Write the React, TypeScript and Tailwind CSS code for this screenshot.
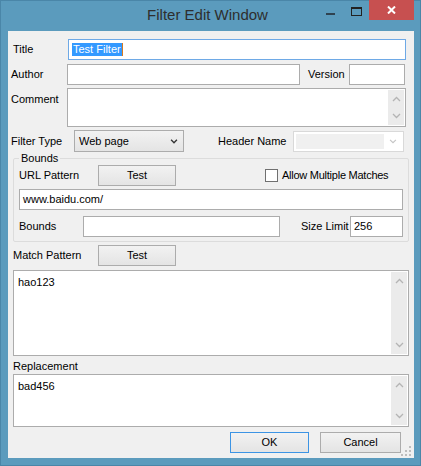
import React from "react";

const F = { fontFamily: '"Liberation Sans", Arial, sans-serif' };

function Chevron({ up = false, color = "#b4b4b4", w = 9, h = 6, sw = 1.3 }: { up?: boolean; color?: string; w?: number; h?: number; sw?: number }) {
  return (
    <svg width={w} height={h} viewBox="0 0 9 6">
      <polyline
        points={up ? "1,5 4.5,1.5 8,5" : "1,1 4.5,4.5 8,1"}
        fill="none"
        stroke={color}
        strokeWidth={sw}
      />
    </svg>
  );
}

function VScroll() {
  return (
    <div className="w-[16px] bg-[#ebebeb] flex flex-col justify-between items-center py-[6px]">
      <Chevron up />
      <Chevron />
    </div>
  );
}

function TextBox({ className = "", children }: { className?: string; children?: React.ReactNode }) {
  return (
    <div className={`h-[21px] bg-white border border-[#acacac] flex items-center px-[3px] text-[11px] text-black ${className}`}>
      {children}
    </div>
  );
}

function Btn({ className = "", children }: { className?: string; children: React.ReactNode }) {
  return (
    <div className={`h-[21px] border bg-gradient-to-b from-[#f2f2f2] to-[#e4e4e4] flex items-center justify-center text-[11px] text-black ${className}`}>
      {children}
    </div>
  );
}

export default function App() {
  return (
    <div style={F} className="w-[421px] h-[466px] bg-[#5b9bbd] border border-[#4a86a8] flex flex-col text-[11px] text-black select-none whitespace-nowrap">
      {/* Title bar */}
      <div className="h-[30px] flex items-start">
        <div className="flex-1" />
        <div className="text-[15px] leading-[28px] text-[#2e2e2e]">Filter Edit Window</div>
        <div className="flex-1 flex justify-end items-start pr-[6px]">
          <div className="w-[26px] h-[20px] flex items-start justify-center pt-[12px]">
            <div className="w-[9px] h-[2px] bg-[#2f4250]" />
          </div>
          <div className="w-[26px] h-[20px] flex items-start justify-center pt-[6px]">
            <div className="w-[11px] h-[9px] border border-t-2 border-[#222]" />
          </div>
          <div className="w-[45px] h-[20px] -mt-px bg-[#c75050] flex items-center justify-center">
            <svg width="9" height="8" viewBox="0 0 9 8">
              <path d="M1 0.5 L8 7.5 M8 0.5 L1 7.5" stroke="white" strokeWidth="2" />
            </svg>
          </div>
        </div>
      </div>

      {/* Client area */}
      <div className="relative ml-[7px] mr-[6px] w-[406px] h-[427px] bg-[#f0f0f0] flex flex-col">
        {/* Title */}
        <div className="mt-[8px] h-[21px] flex items-center">
          <div className="w-[60px] pl-[5px]">Title</div>
          <div className="w-[338px] h-[21px] bg-white border border-[#6ea9e6] flex items-center px-[3px]">
            <span className="bg-[#3399ff] text-white leading-[13px] px-px">Test Filter</span>
            <span className="w-px h-[13px] bg-[#d87a1e]" />
          </div>
        </div>

        {/* Author / Version */}
        <div className="mt-[4px] h-[21px] flex items-center">
          <div className="w-[59px] pl-[3px]">Author</div>
          <TextBox className="w-[233px]" />
          <div className="ml-[8px] w-[41px]">Version</div>
          <TextBox className="w-[56px]" />
        </div>

        {/* Comment */}
        <div className="mt-[3px] h-[39px] flex items-start">
          <div className="w-[59px] pl-[3px] pt-[3px]">Comment</div>
          <div className="w-[339px] h-[39px] bg-white border border-[#acacac] flex justify-end p-px">
            <VScroll />
          </div>
        </div>

        {/* Filter type / Header name */}
        <div className="mt-[3px] h-[22px] flex items-center">
          <div className="w-[66px] pl-[3px]">Filter Type</div>
          <div className="w-[110px] h-[22px] border border-[#acacac] bg-gradient-to-b from-[#f2f2f2] to-[#e4e4e4] flex items-center justify-between pl-[4px] pr-[5px]">
            <span>Web page</span>
            <Chevron color="#333" w={8} h={5} sw={1.6} />
          </div>
          <div className="ml-[34px] w-[75px]">Header Name</div>
          <div className="w-[111px] h-[21px] border border-[#d9d9d9] bg-white flex items-center p-[2px]">
            <div className="w-[88px] h-full bg-[#f0f0f0]" />
            <div className="flex-1 flex justify-center">
              <Chevron color="#c4c4c4" w={8} h={5} />
            </div>
          </div>
        </div>

        {/* Bounds group */}
        <fieldset className="mx-[5px] border border-[#dcdcdc] rounded-[2px] px-[5px] pb-[4px]">
          <legend className="px-[2px] leading-[13px]">Bounds</legend>
          <div className="h-[21px] flex items-center">
            <div className="w-[79px]">URL Pattern</div>
            <Btn className="w-[78px] border-[#acacac]">Test</Btn>
            <div className="ml-[89px] w-[13px] h-[13px] bg-white border border-[#707070]" />
            <div className="ml-[4px] tracking-[-0.25px]">Allow Multiple Matches</div>
          </div>
          <TextBox className="mt-[3px] w-[384px]">www.baidu.com/</TextBox>
          <div className="mt-[6px] h-[21px] flex items-center">
            <div className="w-[64px]">Bounds</div>
            <TextBox className="w-[197px]" />
            <div className="ml-[21px] w-[49px]">Size Limit</div>
            <TextBox className="w-[53px]">256</TextBox>
          </div>
        </fieldset>

        {/* Match pattern */}
        <div className="mt-[3px] h-[21px] flex items-center">
          <div className="w-[90px] pl-[5px]">Match Pattern</div>
          <Btn className="w-[78px] border-[#acacac]">Test</Btn>
        </div>
        <div className="mt-[4px] mx-[5px] h-[86px] bg-white border border-[#acacac] flex p-px">
          <div className="flex-1 pl-[3px] pt-[2px]">hao123</div>
          <VScroll />
        </div>

        {/* Replacement */}
        <div className="mt-[3px] h-[15px] pl-[5px] leading-[15px]">Replacement</div>
        <div className="mx-[5px] h-[53px] bg-white border border-[#acacac] flex p-px">
          <div className="flex-1 pl-[3px] pt-[2px]">bad456</div>
          <VScroll />
        </div>

        {/* Buttons */}
        <div className="mt-[5px] h-[21px] flex items-center">
          <Btn className="ml-[222px] w-[79px] border-[#3c94e4]">OK</Btn>
          <Btn className="ml-[11px] w-[81px] border-[#acacac]">Cancel</Btn>
        </div>

        {/* size grip */}
        <svg className="absolute right-[3px] bottom-[2px]" width="10" height="10" viewBox="0 0 10 10">
          <rect x="8" y="0" width="2" height="2" fill="#bdbdbd" />
          <rect x="4" y="4" width="2" height="2" fill="#bdbdbd" />
          <rect x="8" y="4" width="2" height="2" fill="#bdbdbd" />
          <rect x="0" y="8" width="2" height="2" fill="#bdbdbd" />
          <rect x="4" y="8" width="2" height="2" fill="#bdbdbd" />
          <rect x="8" y="8" width="2" height="2" fill="#bdbdbd" />
        </svg>
      </div>
    </div>
  );
}
